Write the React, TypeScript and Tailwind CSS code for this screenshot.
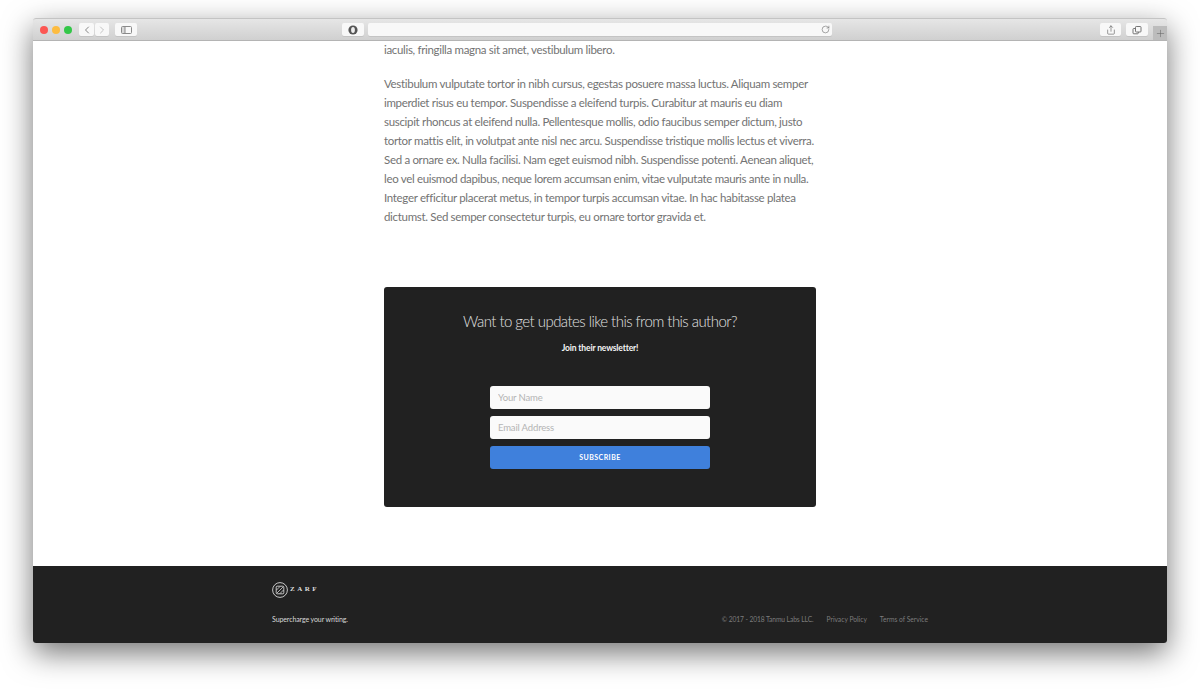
import { ChevronLeft, ChevronRight, RotateCw, Share, Plus } from 'lucide-react';

const font = "font-['Lato','Open_Sans',sans-serif]";

const lines = [
  'Vestibulum vulputate tortor in nibh cursus, egestas posuere massa luctus. Aliquam semper',
  'imperdiet risus eu tempor. Suspendisse a eleifend turpis. Curabitur at mauris eu diam',
  'suscipit rhoncus at eleifend nulla. Pellentesque mollis, odio faucibus semper dictum, justo',
  'tortor mattis elit, in volutpat ante nisl nec arcu. Suspendisse tristique mollis lectus et viverra.',
  'Sed a ornare ex. Nulla facilisi. Nam eget euismod nibh. Suspendisse potenti. Aenean aliquet,',
  'leo vel euismod dapibus, neque lorem accumsan enim, vitae vulputate mauris ante in nulla.',
  'Integer efficitur placerat metus, in tempor turpis accumsan vitae. In hac habitasse platea',
  'dictumst. Sed semper consectetur turpis, eu ornare tortor gravida et.',
];

function BarButton({ className, children }: { className: string; children?: React.ReactNode }) {
  return (
    <div className={`flex h-[13px] items-center justify-center rounded-[2px] bg-[#f8f8f8] shadow-[0_1px_0_#c4c4c4] ${className}`}>
      {children}
    </div>
  );
}

function TitleBar() {
  return (
    <div className="relative flex h-[23px] shrink-0 items-center rounded-t-[3px] border-t border-b border-t-[#c4c4c4] border-b-[#b4b4b4] bg-gradient-to-b from-[#e6e6e6] to-[#d0d0d0] pl-[7px]">
      <div className="flex gap-[4px]">
        <span className="h-[8px] w-[8px] rounded-full bg-[#fc5753]" />
        <span className="h-[8px] w-[8px] rounded-full bg-[#fdbc40]" />
        <span className="h-[8px] w-[8px] rounded-full bg-[#33c748]" />
      </div>
      <div className="ml-[7px] flex gap-px">
        <BarButton className="w-[15px]"><ChevronLeft size={12} strokeWidth={1.4} className="text-[#555]" /></BarButton>
        <BarButton className="w-[14px]"><ChevronRight size={12} strokeWidth={1.4} className="text-[#aaa]" /></BarButton>
      </div>
      <BarButton className="ml-[6px] w-[22px]">
        <svg width="11" height="8" viewBox="0 0 11 8" fill="none">
          <rect x="0.5" y="0.5" width="10" height="7" rx="1" stroke="#8a8a8a" />
          <rect x="1" y="1" width="3" height="6" fill="#d8d8d8" />
          <path d="M4 0.5V7.5" stroke="#8a8a8a" />
        </svg>
      </BarButton>
      <BarButton className="ml-[205px] w-[22px]">
        <svg width="10" height="10" viewBox="0 0 10 10">
          <circle cx="5" cy="5" r="4.6" fill="#555" />
          <ellipse cx="5" cy="5" rx="1.9" ry="3" fill="#eee" />
        </svg>
      </BarButton>
      <div className="ml-[4px] flex h-[13px] w-[464px] items-center justify-end rounded-[2px] bg-[#f8f8f8] pr-[2px] shadow-[0_1px_0_#c4c4c4]">
        <RotateCw size={9} strokeWidth={1.5} className="text-[#666]" />
      </div>
      <BarButton className="ml-[268px] w-[21px]"><Share size={10} strokeWidth={1.4} className="text-[#555]" /></BarButton>
      <BarButton className="ml-[5px] w-[22px]">
        <svg width="10" height="10" viewBox="0 0 10 10" fill="none" stroke="#666" strokeWidth="0.9">
          <rect x="3.5" y="1.5" width="5.5" height="5.5" rx="0.8" />
          <path d="M3.5 3.5H1.8a.8.8 0 0 0-.8.8V8a.8.8 0 0 0 .8.8h3.7a.8.8 0 0 0 .8-.8V7" />
        </svg>
      </BarButton>
      <div className="absolute right-0 bottom-0 flex h-[14px] w-[14px] items-center justify-center bg-[#bcbcbc]">
        <Plus size={11} strokeWidth={1.2} className="text-[#666]" />
      </div>
    </div>
  );
}

function Newsletter() {
  return (
    <div className="mt-[61px] flex h-[220px] flex-col items-center rounded-[3px] bg-[#212121] pt-[23px]">
      <h2 className="text-[15px] leading-[22px] font-light tracking-[-0.55px] text-[#e0e0e0]">Want to get updates like this from this author?</h2>
      <p className="mt-[10px] text-[8.5px] leading-[12px] font-bold tracking-[-0.15px] text-[#f5f5f5]">Join their newsletter!</p>
      <div className="mt-[32px] flex w-[220px] flex-col">
        <input placeholder="Your Name" className="h-[23px] rounded-[3px] bg-[#fafafa] px-[8px] pb-px text-[9.5px] tracking-[-0.15px] outline-none placeholder:text-[#b4b4b4]" />
        <input placeholder="Email Address" className="mt-[7px] h-[23px] rounded-[3px] bg-[#fafafa] px-[8px] pb-px text-[9.5px] tracking-[-0.15px] outline-none placeholder:text-[#b4b4b4]" />
        <button className="mt-[7px] h-[23px] rounded-[3px] bg-[#3f80dc] pb-px text-[7px] font-bold tracking-[0.45px] text-white">SUBSCRIBE</button>
      </div>
    </div>
  );
}

function Footer() {
  return (
    <div className="flex h-[77px] shrink-0 justify-center rounded-b-[3px] bg-[#212121]">
      <div className="flex w-[656px] flex-col pt-[15px]">
        <div className="flex h-[17px] items-center gap-[2px]">
          <svg width="16" height="16" viewBox="0 0 16 16" fill="none" stroke="#d8d8d8">
            <circle cx="8" cy="8" r="7.4" strokeWidth="0.9" />
            <rect x="4.2" y="4.2" width="7.6" height="7.6" rx="1" strokeWidth="0.9" />
            <path d="M5 11L11 5M4.5 8L8 4.5M8 11.5L11.5 8" strokeWidth="0.8" />
          </svg>
          <span className="font-['Liberation_Serif',serif] text-[7px] leading-none font-bold tracking-[0.36em] text-[#ddd]">ZARF</span>
        </div>
        <div className="mt-[15px] flex items-center justify-between">
          <span className="text-[7px] leading-[12px] tracking-[-0.1px] text-[#d8d8d8]">Supercharge your writing.</span>
          <div className="flex gap-[13px] text-[6.7px] leading-[12px] text-[#7c7c7c]">
            <span className="tracking-[-0.1px]">© 2017 - 2018 Tanmu Labs LLC.</span>
            <span>Privacy Policy</span>
            <span>Terms of Service</span>
          </div>
        </div>
      </div>
    </div>
  );
}

export default function App() {
  return (
    <div className={`h-[690px] w-[1200px] overflow-hidden bg-white px-[33px] pt-[18px] ${font}`}>
      <div className="flex h-[625px] flex-col rounded-[3px] opacity-[0.999] shadow-[0_10px_30px_rgba(0,0,0,0.55)]">
        <TitleBar />
        <div className="flex-1 overflow-hidden bg-white">
          <div className="mx-auto -mt-px w-[432px] text-[11.5px] leading-[19px] tracking-[-0.32px] text-[#737373]">
            <p className="whitespace-nowrap">iaculis, fringilla magna sit amet, vestibulum libero.</p>
            <div className="mt-[15px]">
              {lines.map((line) => (
                <p key={line} className="whitespace-nowrap">{line}</p>
              ))}
            </div>
            <Newsletter />
          </div>
        </div>
        <Footer />
      </div>
    </div>
  );
}
